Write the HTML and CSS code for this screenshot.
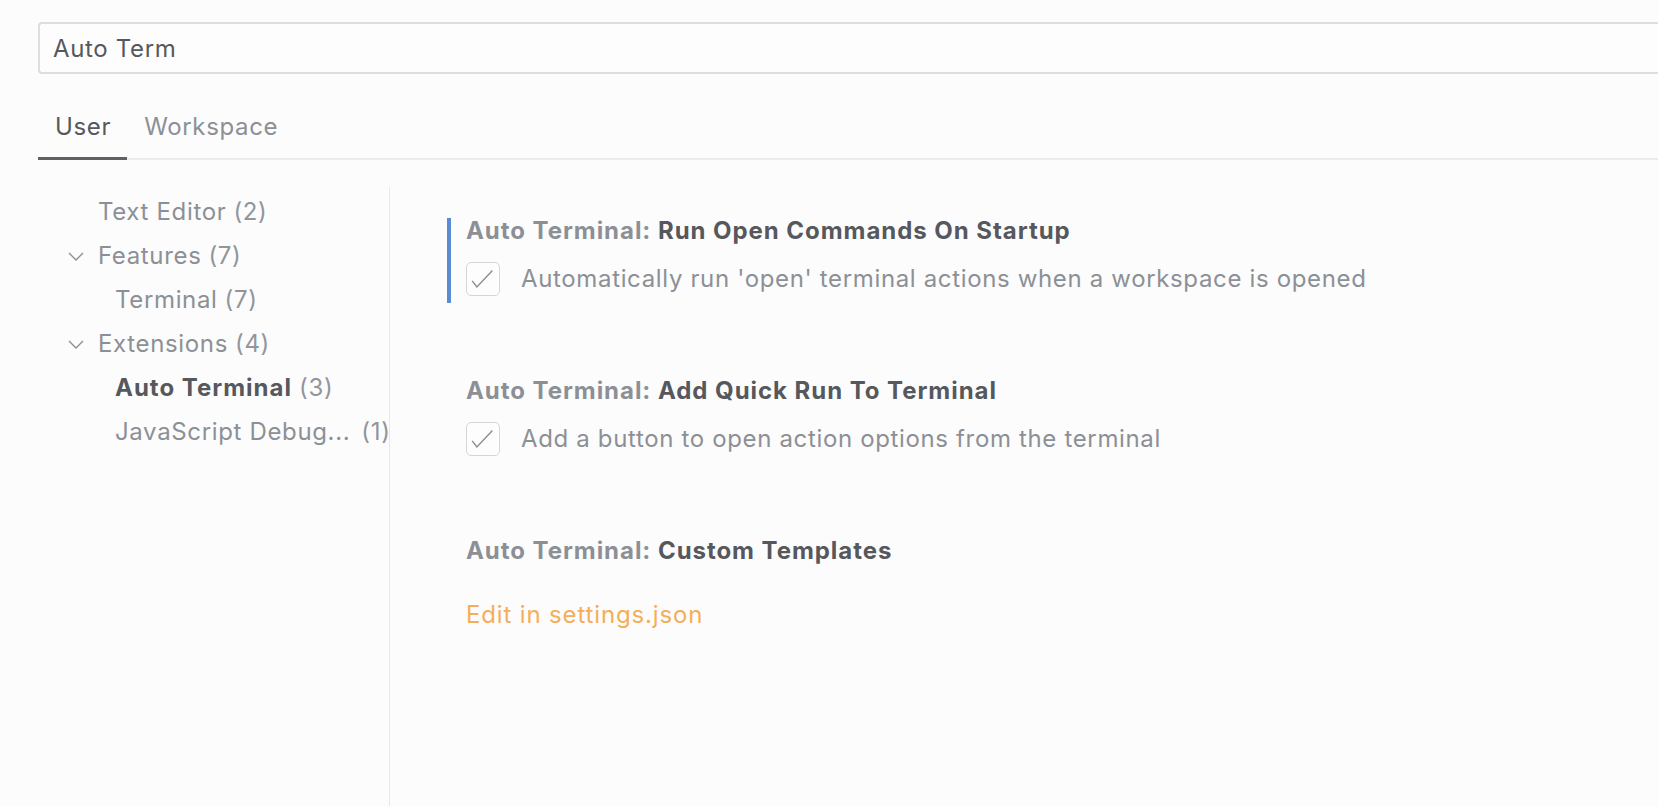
FILE: index.html
```html
<!DOCTYPE html>
<html>
<head>
<meta charset="utf-8">
<link rel="stylesheet" href="styles.css">
</head>
<body>
<div class="page">
  <div class="search">Auto Term</div>
  <div class="tabs">
    <div class="tab active">User</div>
    <div class="tab">Workspace</div>
  </div>
  <div class="body">
    <nav class="sidebar">
      <div class="row lvl1"><span class="label">Text Editor</span><span class="count">(2)</span></div>
      <div class="row lvl1"><svg class="chev" viewBox="0 0 16 9"><polyline points="1,1 8,8 15,1"/></svg><span class="label">Features</span><span class="count">(7)</span></div>
      <div class="row lvl2"><span class="label">Terminal</span><span class="count">(7)</span></div>
      <div class="row lvl1"><svg class="chev" viewBox="0 0 16 9"><polyline points="1,1 8,8 15,1"/></svg><span class="label">Extensions</span><span class="count">(4)</span></div>
      <div class="row lvl2 selected"><span class="label">Auto Terminal</span><span class="count">(3)</span></div>
      <div class="row lvl2"><span class="label">JavaScript Debug...</span><span class="count wide">(1)</span></div>
    </nav>
    <main class="content">
      <section class="setting focused">
        <div class="title"><span class="cat">Auto Terminal: </span>Run Open Commands On Startup</div>
        <div class="bool">
          <span class="checkbox"><svg viewBox="0 0 34 34"><polyline points="5.5,19 10.5,25.5 27,8"/></svg></span>
          <span class="desc">Automatically run 'open' terminal actions when a workspace is opened</span>
        </div>
      </section>
      <section class="setting">
        <div class="title"><span class="cat">Auto Terminal: </span>Add Quick Run To Terminal</div>
        <div class="bool">
          <span class="checkbox"><svg viewBox="0 0 34 34"><polyline points="5.5,19 10.5,25.5 27,8"/></svg></span>
          <span class="desc">Add a button to open action options from the terminal</span>
        </div>
      </section>
      <section class="setting">
        <div class="title"><span class="cat">Auto Terminal: </span>Custom Templates</div>
        <a class="link">Edit in settings.json</a>
      </section>
    </main>
  </div>
</div>
</body>
</html>
```

FILE: styles.css
```css
html, body {
  margin: 0;
  padding: 0;
  background: #fcfcfc;
  height: 100%;
  overflow: hidden;
}
body {
  font-family: Inter, "Noto Sans", sans-serif;
  font-size: 24px;
  letter-spacing: 0.65px;
  color: #56585d;
}
.page {
  padding: 22px 0 0 38px;
  height: 100%;
  box-sizing: border-box;
  display: flex;
  flex-direction: column;
}
.search {
  height: 52px;
  box-sizing: border-box;
  border: 2px solid #dedede;
  border-right: none;
  border-radius: 4px 0 0 4px;
  background: #fdfdfd;
  padding-left: 13px;
  display: flex;
  align-items: center;
  color: #56585d;
}
.tabs {
  margin-top: 22px;
  display: flex;
  border-bottom: 2px solid #ececec;
}
.tab {
  padding: 16px 16px 15px 17px;
  line-height: 30px;
  color: #8c9096;
  border-bottom: 3px solid transparent;
  margin-bottom: -2px;
}
.tab.active {
  color: #56585d;
  border-bottom-color: #5f6166;
}
.body {
  flex: 1;
  display: flex;
  margin-top: 27px;
}
.sidebar {
  width: 352px;
  flex: none;
  border-right: 1px solid #e8e8e8;
  padding-top: 2px;
  box-sizing: border-box;
}
.row {
  height: 44px;
  display: flex;
  align-items: center;
  color: #8c9096;
  white-space: nowrap;
  position: relative;
}
.row.lvl1 { padding-left: 60px; }
.row.lvl2 { padding-left: 77px; }
.row .count { margin-left: 7px; color: #92959b; }
.row .count.wide { margin-left: 11px; }
.row.selected .label { color: #56585d; font-weight: 700; letter-spacing: 1px; }
.chev {
  position: absolute;
  left: 30px;
  top: 19px;
  width: 16px;
  height: 9px;
  fill: none;
  stroke: #8c9096;
  stroke-width: 1.4;
}
.content {
  flex: 1;
  padding-top: 31px;
  padding-left: 57px;
}
.setting {
  border-left: 4px solid transparent;
  padding: 0 0 7px 15px;
  margin-bottom: 75px;
}
.setting.focused { border-left-color: #5b8bd0; }
.title {
  line-height: 26px;
  font-weight: 700;
  letter-spacing: 0.95px;
  color: #56585d;
}
.title .cat { color: #8c9096; }
.bool {
  margin-top: 18px;
  display: flex;
  align-items: center;
}
.checkbox {
  width: 34px;
  height: 34px;
  box-sizing: border-box;
  border: 1px solid #d6d6d6;
  border-radius: 5px;
  background: #fdfdfd;
  flex: none;
  display: block;
}
.checkbox svg {
  display: block;
  width: 32px;
  height: 32px;
  fill: none;
  stroke: #8a8d93;
  stroke-width: 1.5;
}
.desc {
  margin-left: 21px;
  color: #8c9096;
  line-height: 34px;
}
.link {
  display: block;
  margin-top: 38px;
  line-height: 26px;
  color: #f5ae57;
  letter-spacing: 0.85px;
}
```
